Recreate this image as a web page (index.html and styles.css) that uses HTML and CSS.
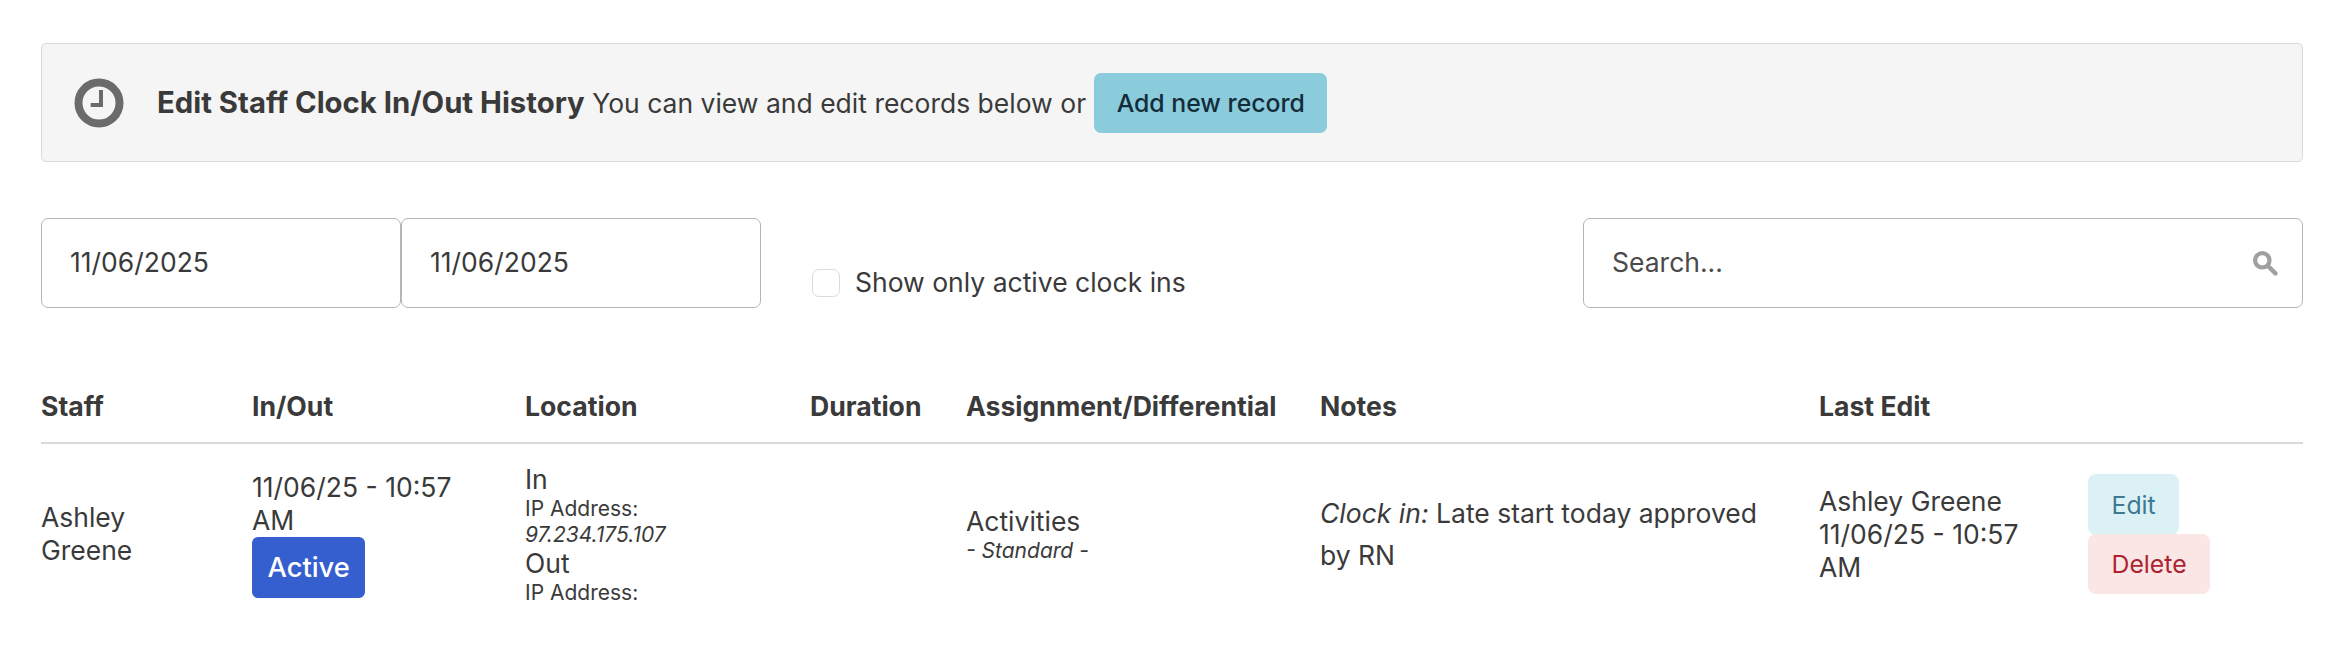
FILE: index.html
```html
<!DOCTYPE html>
<html lang="en">
<head>
<meta charset="utf-8">
<title>Edit Staff Clock In/Out History</title>
<link rel="stylesheet" href="styles.css">
</head>
<body>
<main class="page">
  <section class="banner">
    <svg class="clock" viewBox="0 0 50 50" aria-hidden="true">
      <circle cx="25" cy="25" r="20.5" fill="none" stroke="#6b6b6b" stroke-width="8"/>
      <path d="M27 12V27H16.7" fill="none" stroke="#6b6b6b" stroke-width="4"/>
    </svg>
    <p class="banner-text"><strong>Edit Staff Clock In/Out History</strong> You can view and edit records below or</p>
    <button class="add-btn" type="button">Add new record</button>
  </section>

  <section class="filters">
    <div class="dates">
      <input class="field date" type="text" value="11/06/2025">
      <input class="field date" type="text" value="11/06/2025">
    </div>
    <label class="check"><span class="box"></span>Show only active clock ins</label>
    <div class="search">
      <input class="field search-input" type="text" placeholder="Search...">
      <svg class="search-icon" viewBox="0 0 25 25" aria-hidden="true">
        <circle cx="9.3" cy="9.3" r="7.2" fill="none" stroke="#a0a0a0" stroke-width="4.2"/>
        <path d="M15 15l7.4 7.4" fill="none" stroke="#a0a0a0" stroke-width="4.4" stroke-linecap="round"/>
      </svg>
    </div>
  </section>

  <table class="records">
    <colgroup>
      <col class="c-staff"><col class="c-inout"><col class="c-loc"><col class="c-dur"><col class="c-assign"><col class="c-notes"><col class="c-edit"><col class="c-act">
    </colgroup>
    <thead>
      <tr>
        <th>Staff</th><th>In/Out</th><th>Location</th><th>Duration</th><th>Assignment/Differential</th><th>Notes</th><th>Last Edit</th><th></th>
      </tr>
    </thead>
    <tbody>
      <tr>
        <td>Ashley Greene</td>
        <td>11/06/25 - 10:57 AM<span class="badge">Active</span></td>
        <td>
          <div>In</div>
          <div class="sub">IP Address:</div>
          <div class="sub"><em>97.234.175.107</em></div>
          <div>Out</div>
          <div class="sub">IP Address:</div>
        </td>
        <td></td>
        <td>
          <div>Activities</div>
          <div class="sub"><em>- Standard -</em></div>
        </td>
        <td class="notes"><em>Clock in:</em> Late start today approved by RN</td>
        <td>Ashley Greene<br>11/06/25 - 10:57 AM</td>
        <td class="actions">
          <button class="act edit" type="button">Edit</button>
          <button class="act delete" type="button">Delete</button>
        </td>
      </tr>
    </tbody>
  </table>
</main>
</body>
</html>
```
FILE: styles.css
```css
* { box-sizing: border-box; }
html, body { margin: 0; background: #fff; }
body {
  font-family: Inter, "Liberation Sans", sans-serif;
  font-size: 26.5px;
  line-height: 33px;
  color: #3a3a3a;
}
.page { padding: 43px 43px 0 41px; }

.banner {
  display: flex;
  align-items: center;
  height: 119px;
  padding-left: 32px;
  background: #f5f5f5;
  border: 1px solid #d9d9d9;
  border-radius: 5px;
}
.clock { width: 50px; height: 50px; flex: none; margin-right: 33px; }
.banner-text { margin: 0 8px 0 0; }
.banner-text strong { font-weight: 700; font-size: 29.3px; }
.add-btn {
  height: 60px;
  padding: 0 22.5px;
  border: 0;
  border-radius: 7px;
  background: #8acbdc;
  color: #142c3a;
  font: 500 24.8px Inter, sans-serif;
}

.filters {
  display: flex;
  margin-top: 56px;
  align-items: flex-start;
}
.dates { display: flex; }
.field {
  height: 90px;
  border: 1px solid #b5b5b5;
  border-radius: 7px;
  padding: 0 28px 2px;
  font: 400 26.5px Inter, sans-serif;
  color: #3a3a3a;
  background: #fff;
  outline: 0;
}
.field::placeholder { color: #4a4a4a; opacity: 1; }
.date { width: 360px; }
.check {
  display: flex;
  align-items: center;
  margin: 48px 0 0 51px;
}
.box {
  width: 28px;
  height: 28px;
  margin: 1px 15px 0 0;
  border: 1.5px solid #dcdcdc;
  border-radius: 7px;
  background: #fff;
}
.search { position: relative; margin-left: auto; width: 720px; }
.search-input { width: 100%; }
.search-icon { position: absolute; right: 25px; top: 33px; width: 25px; height: 25px; }

.records {
  width: 100%;
  margin-top: 57px;
  border-collapse: collapse;
  table-layout: fixed;
}
.c-staff { width: 211px; }
.c-inout { width: 273px; }
.c-loc { width: 285px; }
.c-dur { width: 156px; }
.c-assign { width: 354px; }
.c-notes { width: 499px; }
.c-edit { width: 269px; }
.records th {
  height: 78px;
  padding: 5px 0 0 0;
  text-align: left;
  font-weight: 700;
  font-size: 26.6px;
  border-bottom: 2px solid #d9d9d9;
  white-space: nowrap;
}
.records td {
  padding: 19px 40px 18px 0;
  vertical-align: middle;
}
.sub { font-size: 21px; line-height: 25.5px; }
.records .notes { line-height: 42px; }
.badge {
  display: block;
  width: fit-content;
  height: 61px;
  padding: 0 15.5px;
  line-height: 61px;
  font-weight: 500;
  font-size: 27.3px;
  color: #fff;
  background: #355ecf;
  border-radius: 6px;
}
.actions { white-space: nowrap; }
.act {
  display: block;
  height: 61px;
  padding: 0 23.5px;
  border: 0;
  border-radius: 8px;
  font: 400 24.8px Inter, sans-serif;
}
.edit { background: #dcf1f5; color: #3c7a92; }
.delete { position: relative; margin-top: -1px; height: 60px; background: #fbe6e6; color: #ad2430; }
```
